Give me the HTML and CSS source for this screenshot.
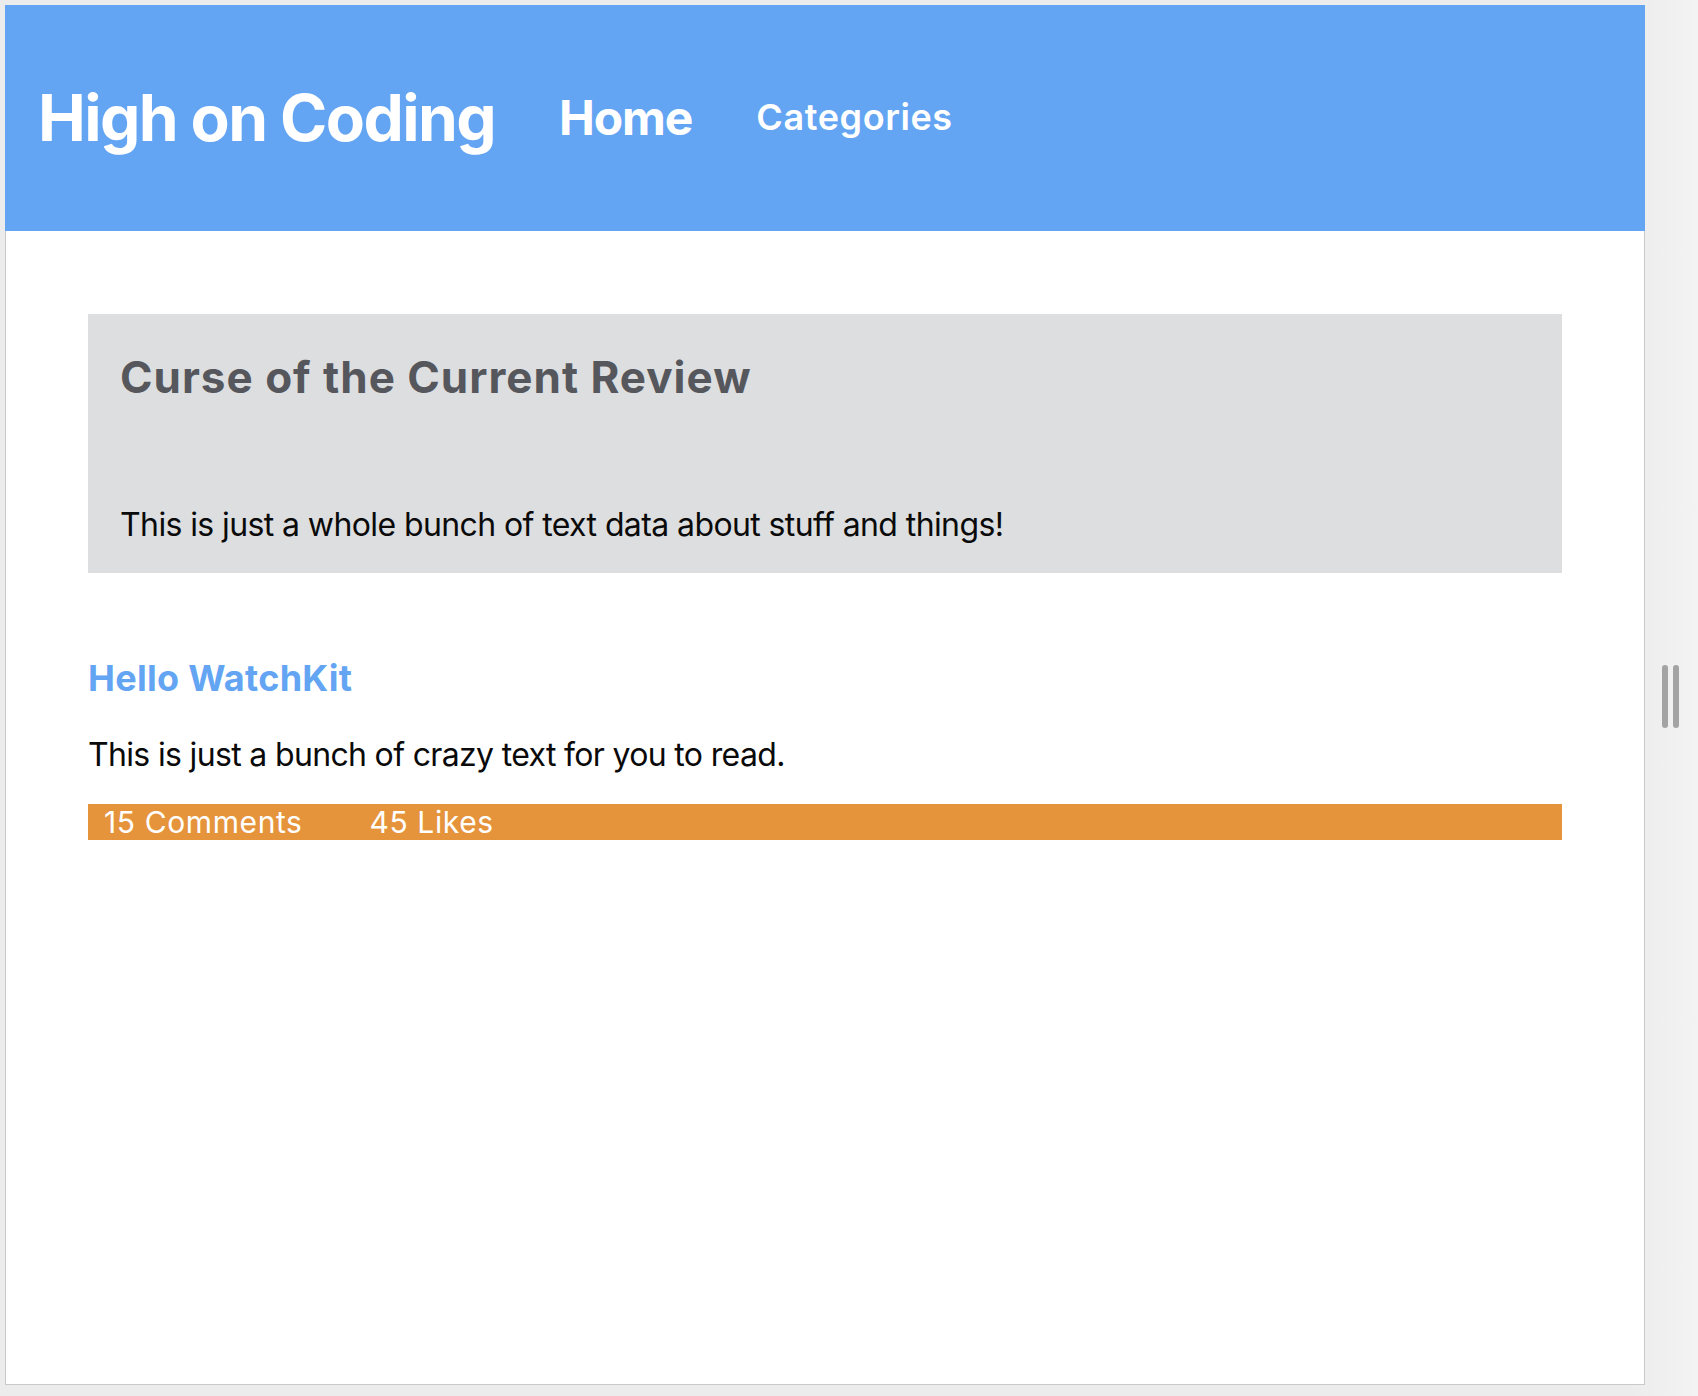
FILE: index.html
```html
<!DOCTYPE html>
<html lang="en">
<head>
<meta charset="utf-8">
<title>High on Coding</title>
<link rel="stylesheet" href="styles.css">
</head>
<body>
<div class="desk">
  <div class="window">
    <header class="topbar">
      <h1 class="brand">High on Coding</h1>
      <nav class="nav">
        <a class="nav-home" href="#">Home</a>
        <a class="nav-cat" href="#">Categories</a>
      </nav>
    </header>
    <main class="content">
      <section class="featured">
        <h2 class="featured-title">Curse of the Current Review</h2>
        <p class="featured-text">This is just a whole bunch of text data about stuff and things!</p>
      </section>
      <article class="post">
        <h3 class="post-title">Hello WatchKit</h3>
        <p class="post-text">This is just a bunch of crazy text for you to read.</p>
        <div class="post-meta">
          <span class="meta-item">15 Comments</span>
          <span class="meta-item">45 Likes</span>
        </div>
      </article>
    </main>
  </div>
  <div class="side">
    <div class="handle"><span class="bar"></span><span class="bar"></span></div>
  </div>
</div>
</body>
</html>
```

FILE: styles.css
```css
* { box-sizing: border-box; }

html, body {
  margin: 0;
  padding: 0;
}

body {
  font-family: Inter, "Noto Sans", "Liberation Sans", sans-serif;
  background: #ededed;
}

.desk {
  display: flex;
  height: 1396px;
  background: linear-gradient(to right, #ececec 0%, #ececec 96%, #f3f3f3 100%);
}

.window {
  margin: 5px 0 0 5px;
  width: 1640px;
  height: 1380px;
  background: #ffffff;
  border: 1px solid #c9c9c9;
  border-top: none;
  display: flex;
  flex-direction: column;
}

.topbar {
  height: 226px;
  background: #63a5f3;
  display: flex;
  align-items: center;
  padding-left: 33px;
  margin: 0 -1px;
}

.brand {
  margin: 0;
  font-size: 64px;
  font-weight: 700;
  line-height: 1.2;
  color: #ffffff;
  letter-spacing: -1.6px;
}

.nav {
  display: flex;
  align-items: center;
  gap: 64px;
  margin-left: 64px;
}

.nav a {
  color: #ffffff;
  text-decoration: none;
  line-height: 1.2;
}

.nav-home {
  font-size: 48px;
  font-weight: 700;
  letter-spacing: -1.1px;
}

.nav-cat {
  font-size: 36px;
  font-weight: 600;
  letter-spacing: 0.6px;
}

.content {
  padding: 83px 82px 0;
}

.featured {
  background: #dddee0;
  padding: 37px 32px 29px;
}

.featured-title {
  margin: 0;
  font-size: 44px;
  font-weight: 700;
  line-height: 1.2;
  color: #55575c;
  letter-spacing: 1px;
}

.featured-text {
  margin: 102px 0 0;
  font-size: 32px;
  line-height: 1.2;
  color: #0a0a0a;
  letter-spacing: -0.6px;
}

.post {
  margin-top: 84px;
}

.post-title {
  margin: 0;
  font-size: 36px;
  font-weight: 700;
  line-height: 1.2;
  color: #63a5f3;
  letter-spacing: 0.3px;
}

.post-text {
  margin: 36px 0 0;
  font-size: 32px;
  line-height: 1.2;
  color: #0a0a0a;
  letter-spacing: -0.66px;
}

.post-meta {
  margin-top: 29px;
  background: #e5943c;
  height: 36px;
  display: flex;
  gap: 67px;
  padding-left: 16px;
}

.meta-item {
  font-size: 30px;
  line-height: 36px;
  color: #ffffff;
  letter-spacing: 0.6px;
}

.side {
  flex: 1;
  display: flex;
  align-items: center;
  justify-content: center;
}

.handle {
  display: flex;
  gap: 5px;
  margin-right: 3px;
  margin-bottom: 4px;
}

.bar {
  width: 6px;
  height: 63px;
  background: #a3a3a3;
  border-radius: 3px;
}
```
